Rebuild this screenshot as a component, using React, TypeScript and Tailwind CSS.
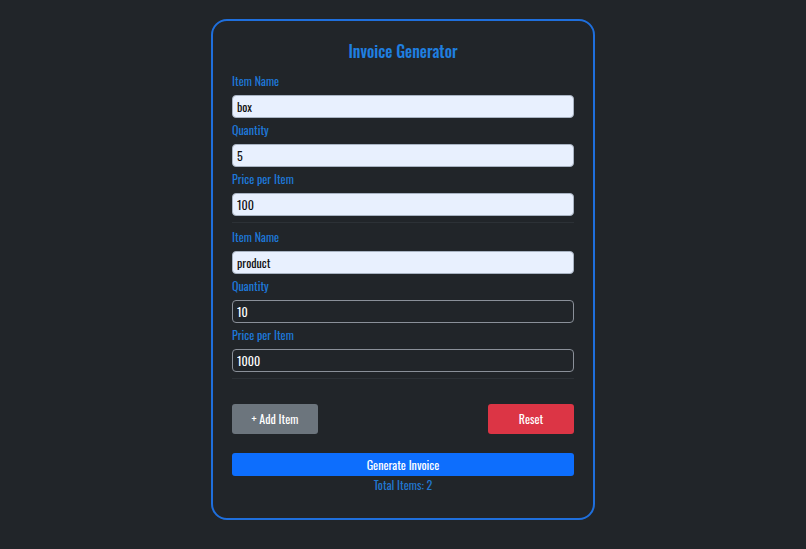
import { useState } from 'react'

type Item = { name: string; quantity: string; price: string }

function Field({
  label,
  value,
  filled,
  last,
  onChange,
}: {
  label: string
  value: string
  filled: boolean
  last?: boolean
  onChange: (v: string) => void
}) {
  return (
    <div className={last ? '' : 'mb-[3px]'}>
      <label className="block h-[18px] leading-[18px] mb-[5px] text-[12px] text-[#1e78d9]">
        {label}
      </label>
      <input
        value={value}
        onChange={(e) => onChange(e.target.value)}
        className={
          filled
            ? "block w-full h-[23px] rounded-[4px] border border-[#a8b3c2] bg-[#e8f0fe] px-[4px] font-['Oswald',sans-serif] text-[12px] text-[#111] outline-none"
            : "block w-full h-[23px] rounded-[4px] border border-[#8a9099] bg-[#212529] px-[4px] font-['Oswald',sans-serif] text-[12px] text-white outline-none"
        }
      />
    </div>
  )
}

export default function App() {
  const [items, setItems] = useState<Item[]>([
    { name: 'box', quantity: '5', price: '100' },
    { name: 'product', quantity: '10', price: '1000' },
  ])

  const update = (i: number, key: keyof Item, v: string) =>
    setItems((prev) => prev.map((it, idx) => (idx === i ? { ...it, [key]: v } : it)))

  return (
    <div className="min-h-[549px] bg-[#212529] pt-[19px] pb-[29px] font-['Oswald',sans-serif]">
      <div className="mx-auto w-[384px] rounded-[16px] border-2 border-[#1f6fdc] bg-[#212529] px-[19px] pt-[17px] pb-[24px]">
        <h1 className="text-center text-[16px] leading-[26px] font-medium text-[#1f7fe0] mb-[8px]">
          Invoice Generator
        </h1>

        {items.map((it, i) => (
          <div key={i} className="pb-[6px] mb-[5px] border-b border-[#2c3136]">
            <Field label="Item Name" value={it.name} filled onChange={(v) => update(i, 'name', v)} />
            <Field
              label="Quantity"
              value={it.quantity}
              filled={i === 0}
              onChange={(v) => update(i, 'quantity', v)}
            />
            <Field
              label="Price per Item"
              value={it.price}
              filled={i === 0}
              last
              onChange={(v) => update(i, 'price', v)}
            />
          </div>
        ))}

        <div className="flex justify-between mt-[25px]">
          <button
            onClick={() => setItems([...items, { name: '', quantity: '', price: '' }])}
            className="w-[86px] h-[30px] rounded-[3px] bg-[#6c757d] text-[12px] text-white"
          >
            + Add Item
          </button>
          <button
            onClick={() => setItems([{ name: '', quantity: '', price: '' }])}
            className="w-[86px] h-[30px] rounded-[3px] bg-[#dc3545] text-[12px] text-white"
          >
            Reset
          </button>
        </div>

        <button className="mt-[19px] block w-full h-[23px] rounded-[3px] bg-[#0d6efd] text-[12px] text-white">
          Generate Invoice
        </button>
        <p className="text-center text-[12px] leading-[18px] text-[#2277d0]">
          Total Items: {items.length}
        </p>
      </div>
    </div>
  )
}
